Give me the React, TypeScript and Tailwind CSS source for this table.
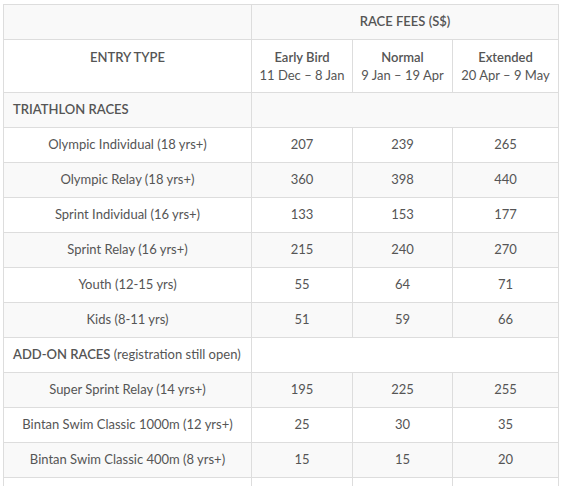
import React from "react";

const tri: [string, string, string, string][] = [
  ["Olympic Individual (18 yrs+)", "207", "239", "265"],
  ["Olympic Relay (18 yrs+)", "360", "398", "440"],
  ["Sprint Individual (16 yrs+)", "133", "153", "177"],
  ["Sprint Relay (16 yrs+)", "215", "240", "270"],
  ["Youth (12-15 yrs)", "55", "64", "71"],
  ["Kids (8-11 yrs)", "51", "59", "66"],
];

const addon: [string, string, string, string][] = [
  ["Super Sprint Relay (14 yrs+)", "195", "225", "255"],
  ["Bintan Swim Classic 1000m (12 yrs+)", "25", "30", "35"],
  ["Bintan Swim Classic 400m (8 yrs+)", "15", "15", "20"],
  ["", "", "", ""],
];

const td = "border border-[#dddddd] text-center align-middle p-0";

export default function App() {
  return (
    <div
      className="w-[563px] h-[486px] bg-white overflow-hidden pl-[3px] pt-[4px] text-[13px] text-[#555555]"
      style={{ fontFamily: "Lato, 'Open Sans', sans-serif" }}
    >
      <table className="border-collapse w-[555px] table-fixed">
        <colgroup>
          <col className="w-[248px]" />
          <col className="w-[101px]" />
          <col className="w-[100px]" />
          <col className="w-[106px]" />
        </colgroup>
        <tbody>
          <tr className="h-[35px] bg-[#f9f9f9]">
            <td className={td}></td>
            <td className={`${td} font-semibold text-[#555]`} colSpan={3}>
              RACE FEES (S$)
            </td>
          </tr>
          <tr className="h-[53px] bg-white">
            <td className={`${td} leading-[18px]`}>
              <div className="font-semibold">ENTRY TYPE</div>
              <div>&nbsp;</div>
            </td>
            <td className={`${td} leading-[18px]`}>
              <div className="font-semibold">Early Bird</div>
              <div>11 Dec – 8 Jan</div>
            </td>
            <td className={`${td} leading-[18px]`}>
              <div className="font-semibold">Normal</div>
              <div>9 Jan – 19 Apr</div>
            </td>
            <td className={`${td} leading-[18px]`}>
              <div className="font-semibold">Extended</div>
              <div>20 Apr – 9 May</div>
            </td>
          </tr>
          <tr className="h-[35px] bg-[#f9f9f9]">
            <td className={`${td} text-left pl-[9px] font-semibold`}>TRIATHLON RACES</td>
            <td className={td} colSpan={3}></td>
          </tr>
          {tri.map((r, i) => (
            <tr key={r[0]} className={`h-[35px] ${i % 2 === 0 ? "bg-white" : "bg-[#f9f9f9]"}`}>
              {r.map((c, j) => (
                <td key={j} className={td}>
                  {c}
                </td>
              ))}
            </tr>
          ))}
          <tr className="h-[35px] bg-white">
            <td className={`${td} text-left pl-[9px]`}>
              <span className="font-semibold">ADD-ON RACES</span> (registration still open)
            </td>
            <td className={td} colSpan={3}></td>
          </tr>
          {addon.map((r, i) => (
            <tr key={i} className={`h-[35px] ${i % 2 === 0 ? "bg-[#f9f9f9]" : "bg-white"}`}>
              {r.map((c, j) => (
                <td key={j} className={td}>
                  {c}
                </td>
              ))}
            </tr>
          ))}
        </tbody>
      </table>
    </div>
  );
}
